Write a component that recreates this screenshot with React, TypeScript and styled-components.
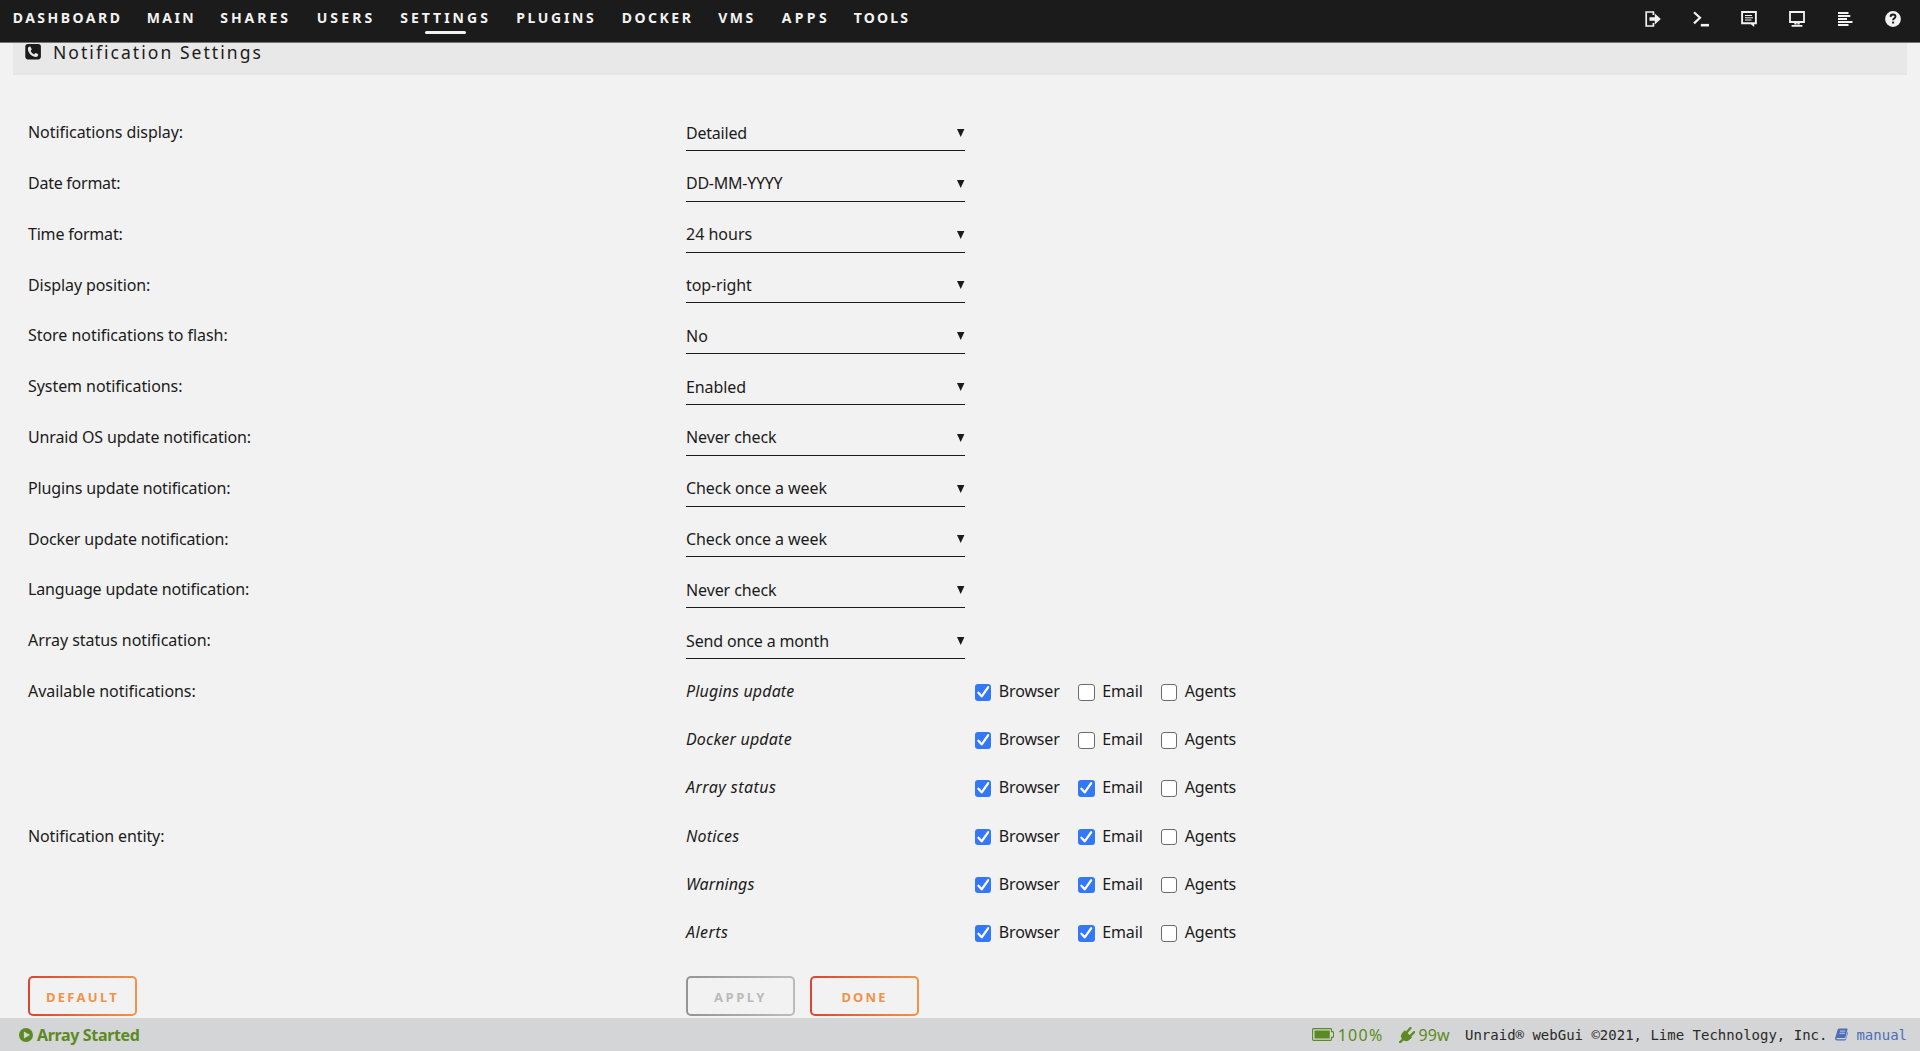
import React from "react";
import styled, { createGlobalStyle } from "styled-components";

const GlobalStyle = createGlobalStyle`
  * { box-sizing: border-box; }
  html, body { margin: 0; padding: 0; }
  body {
    background: #f2f2f2;
    color: #1c1b1b;
    font-family: "Noto Sans", "Open Sans", sans-serif;
    font-size: 16px;
    overflow: hidden;
  }
`;

const Page = styled.div`
  display: flex;
  flex-direction: column;
  height: 1051px;
`;

const Header = styled.header`
  display: flex;
  flex: none;
  justify-content: space-between;
  height: 43px;
  padding: 0 19.5px 0 12.7px;
  background: #1c1b1b;
  border-bottom: 1px solid #757373;
`;

const Nav = styled.nav`
  display: flex;
`;

const NavItem = styled.a<{ $width: number; $tracking: number }>`
  width: ${(p) => p.$width}px;
  display: flex;
  flex-direction: column;
  padding-top: 8px;
  color: #f2f2f2;
  font-size: 14px;
  font-weight: 700;
  line-height: 20px;
  letter-spacing: ${(p) => p.$tracking}px;
  white-space: nowrap;
`;

const ActiveBar = styled.span`
  width: 41px;
  height: 3px;
  margin: 3px 0 0 24.8px;
  border-radius: 2px;
  background: #f2f2f2;
`;

const Tools = styled.div`
  display: flex;
  gap: 32px;
  padding-top: 11px;
`;

const ToolIcon = styled.svg`
  width: 16px;
  height: 16px;
  display: block;
  color: #f2f2f2;
`;

const Main = styled.main`
  flex: 1;
  padding: 0 13px;
`;

const TitleBar = styled.div`
  display: flex;
  align-items: flex-start;
  height: 32px;
  padding: 1px 0 0 12px;
  background: #e8e8e8;
  border-bottom: 2px solid #e5e5e5;
`;

const TitleIcon = styled.svg`
  width: 16px;
  height: 16px;
  color: #1c1b1b;
`;

const TitleText = styled.span`
  margin: -4px 0 0 12px;
  font-size: 17.5px;
  line-height: 24px;
  letter-spacing: 2.05px;
`;

const Form = styled.div`
  padding: 32px 0 0 15px;
`;

const Row = styled.div<{ $height: number }>`
  display: grid;
  grid-template-columns: 658px 279px 1fr;
  height: ${(p) => p.$height}px;
`;

const Label = styled.span<{ $tracking?: number; $italic?: boolean }>`
  padding-top: 14.3px;
  line-height: 22px;
  letter-spacing: ${(p) => p.$tracking ?? 0}px;
  font-style: ${(p) => (p.$italic ? "italic" : "normal")};
  white-space: nowrap;
`;

const Select = styled.div<{ $tracking?: number }>`
  display: flex;
  justify-content: space-between;
  align-items: flex-start;
  height: 44px;
  padding-top: 14.6px;
  border-bottom: 1px solid #1c1b1b;
  line-height: 22px;
  letter-spacing: ${(p) => p.$tracking ?? 0}px;
`;

const Caret = styled.svg`
  width: 8px;
  height: 8px;
  margin: 7.5px 0 0;
`;

const Checks = styled.div`
  display: flex;
  align-items: flex-start;
  padding: 14.3px 0 0 9.5px;
`;

const Check = styled.label<{ $width: number }>`
  display: flex;
  width: ${(p) => p.$width}px;
  line-height: 22px;
  white-space: nowrap;
`;

const Box = styled.span<{ $on: boolean }>`
  display: flex;
  flex: none;
  width: 16.5px;
  height: 16.5px;
  margin: 4px 7.8px 0 0;
  border: ${(p) => (p.$on ? "none" : "1px solid #6c6c6c")};
  border-radius: 3px;
  background: ${(p) => (p.$on ? "#3478f6" : "#fff")};
`;

const CheckText = styled.span<{ $tracking: number }>`
  letter-spacing: ${(p) => p.$tracking}px;
`;

const Actions = styled.div`
  display: grid;
  grid-template-columns: 658px 124px 109px;
  padding-top: 21.4px;
`;

const Button = styled.button<{ $from: string; $to: string; $text: string; $tracking: number }>`
  width: 109px;
  height: 40px;
  padding: 1px 0 0;
  border: 2px solid transparent;
  border-radius: 5px;
  background:
    linear-gradient(#f2f2f2, #f2f2f2) padding-box,
    linear-gradient(90deg, ${(p) => p.$from}, ${(p) => p.$to}) border-box;
  color: ${(p) => p.$text};
  font-family: inherit;
  font-size: 13px;
  font-weight: 700;
  letter-spacing: ${(p) => p.$tracking}px;
`;

const Footer = styled.footer`
  display: flex;
  flex: none;
  align-items: center;
  height: 33px;
  padding: 0 13px 0 19px;
  background: #d4d5d6;
`;

const ArrayState = styled.span`
  display: flex;
  align-items: center;
  gap: 4px;
  margin-right: auto;
  color: #5c8a22;
  font-weight: 700;
  letter-spacing: -0.35px;
`;

const Gauge = styled.span<{ $gap: number; $after: number; $tracking: number }>`
  display: flex;
  align-items: center;
  gap: ${(p) => p.$gap}px;
  margin-right: ${(p) => p.$after}px;
  color: #5c8a22;
  letter-spacing: ${(p) => p.$tracking}px;
`;

const FooterIcon = styled.svg<{ $w: number; $h: number }>`
  width: ${(p) => p.$w}px;
  height: ${(p) => p.$h}px;
  flex: none;
`;

const Copyright = styled.span`
  display: flex;
  align-items: center;
  font-family: "DejaVu Sans Mono", monospace;
  font-size: 14px;
  line-height: 20px;
  color: #2b2a29;
  white-space: pre;
`;

const Manual = styled.a`
  display: flex;
  align-items: center;
  gap: 8px;
  margin-left: 8px;
  color: #4f6db8;
`;

const nav = [
  { name: "DASHBOARD", width: 134, tracking: 2.5 },
  { name: "MAIN", width: 73.5, tracking: 2.4 },
  { name: "SHARES", width: 96.5, tracking: 3 },
  { name: "USERS", width: 83.5, tracking: 3.1 },
  { name: "SETTINGS", width: 116, tracking: 3 },
  { name: "PLUGINS", width: 105.5, tracking: 2.65 },
  { name: "DOCKER", width: 96.5, tracking: 2.5 },
  { name: "VMS", width: 63.5, tracking: 2.5 },
  { name: "APPS", width: 72, tracking: 3.4 },
  { name: "TOOLS", width: 60, tracking: 2.2 },
];
const current = "SETTINGS";

const selects = [
  { label: "Notifications display:", lt: -0.06, value: "Detailed", vt: -0.22 },
  { label: "Date format:", lt: -0.25, value: "DD-MM-YYYY", vt: -0.25 },
  { label: "Time format:", lt: -0.2, value: "24 hours", vt: 0 },
  { label: "Display position:", lt: -0.09, value: "top-right", vt: -0.1 },
  { label: "Store notifications to flash:", lt: -0.04, value: "No", vt: 0 },
  { label: "System notifications:", lt: -0.06, value: "Enabled", vt: -0.1 },
  { label: "Unraid OS update notification:", lt: -0.15, value: "Never check", vt: -0.1 },
  { label: "Plugins update notification:", lt: -0.14, value: "Check once a week", vt: -0.07 },
  { label: "Docker update notification:", lt: -0.15, value: "Check once a week", vt: -0.07 },
  { label: "Language update notification:", lt: -0.17, value: "Never check", vt: -0.1 },
  { label: "Array status notification:", lt: -0.04, value: "Send once a month", vt: -0.15 },
];

const channels = [
  { label: "Available notifications:", lt: -0.05, name: "Plugins update", tracking: 0.15, on: [true, false, false] },
  { label: "", lt: 0, name: "Docker update", tracking: 0.2, on: [true, false, false] },
  { label: "", lt: 0, name: "Array status", tracking: 0.45, on: [true, true, false] },
  { label: "Notification entity:", lt: -0.12, name: "Notices", tracking: 0.2, on: [true, true, false] },
  { label: "", lt: 0, name: "Warnings", tracking: 0.1, on: [true, true, false] },
  { label: "", lt: 0, name: "Alerts", tracking: 0.45, on: [true, true, false] },
];

const targets = [
  { name: "Browser", width: 103.5, tracking: -0.15 },
  { name: "Email", width: 82.5, tracking: -0.15 },
  { name: "Agents", width: 80, tracking: -0.2 },
];

function HeaderIcons() {
  return (
    <Tools>
      <ToolIcon viewBox="0 0 16 16" fill="none" stroke="currentColor">
        <path d="M8.4 4V1H1.2v14H8.4v-3" strokeWidth="1.7" />
        <path d="M4.5 6.2h5.3V2.6L15.8 8l-6 5.4V9.8H4.5z" fill="currentColor" stroke="none" />
      </ToolIcon>
      <ToolIcon viewBox="0 0 16 16" fill="none" stroke="currentColor">
        <path d="M1 1.2l6 5.6-6 5.6" strokeWidth="2.2" />
        <path d="M7.8 14.2H16" strokeWidth="2.6" />
      </ToolIcon>
      <ToolIcon viewBox="0 0 16 16" fill="none" stroke="currentColor">
        <path d="M1.1 1h13.8v11.2H1.1z" strokeWidth="1.9" />
        <path d="M9 12.6h4.2V16z" fill="currentColor" stroke="none" />
        <path d="M4 4.5h7M4 6.7h8M4 9h6.5" strokeWidth="1.1" />
      </ToolIcon>
      <ToolIcon viewBox="0 0 16 16" fill="none" stroke="currentColor">
        <path d="M1 1h14v10H1z" strokeWidth="1.8" />
        <path d="M5.3 11.5h5.4v2H5.3zM2.6 14h10.8v1.8H2.6z" fill="currentColor" stroke="none" />
        <path d="M7.5 12.2h1v1.2h-1z" fill="#1c1b1b" stroke="none" />
      </ToolIcon>
      <ToolIcon viewBox="0 0 16 16" fill="none" stroke="currentColor" strokeWidth="1.9">
        <path d="M1 2h10.5M1 5h12.3M1 8h9M1 11h14.5M1 14h10.5" />
      </ToolIcon>
      <ToolIcon viewBox="0 0 16 16">
        <circle cx="8" cy="8" r="7.9" fill="currentColor" />
        <path d="M5.5 5.9C5.6 4.3 6.6 3.5 8 3.5s2.5.8 2.5 2.1C10.5 7.3 8.1 7.3 8.1 9.3" fill="none" stroke="#1c1b1b" strokeWidth="1.9" />
        <path d="M7.1 10.6h2v1.9h-2z" fill="#1c1b1b" />
      </ToolIcon>
    </Tools>
  );
}

function CheckBox({ on }: { on: boolean }) {
  return (
    <Box $on={on}>
      {on && (
        <svg width="16.5" height="16.5" viewBox="0 0 16.5 16.5" fill="none" stroke="#fff" strokeWidth="2.3">
          <path d="M3.4 8.8l3.3 3.5 6.4-9" strokeLinecap="round" strokeLinejoin="round" />
        </svg>
      )}
    </Box>
  );
}

export default function App() {
  return (
    <Page>
      <GlobalStyle />
      <Header>
        <Nav>
          {nav.map((n) => (
            <NavItem key={n.name} $width={n.width} $tracking={n.tracking}>
              {n.name}
              {n.name === current && <ActiveBar />}
            </NavItem>
          ))}
        </Nav>
        <HeaderIcons />
      </Header>
      <Main>
        <TitleBar>
          <TitleIcon viewBox="0 0 16 16">
            <rect x="0.3" y="0" width="15.6" height="15.4" rx="2.8" fill="currentColor" />
            <path
              d="M4.9 2.6C3.6 3 2.9 3.7 2.9 4.9c0 3.7 4.2 8 8 8 1.3 0 2-.8 2.3-2 .1-.4-.1-.6-.4-.8l-2.1-1c-.6-.2-1 .9-1.5 1.2-.4.2-3.6-2.6-3.5-3.4.1-.5 1.2-1 1-1.6L5.6 2.9c-.2-.3-.4-.4-.7-.3z"
              fill="#e8e8e8"
            />
          </TitleIcon>
          <TitleText>Notification Settings</TitleText>
        </TitleBar>
        <Form>
          {selects.map((s) => (
            <Row key={s.label} $height={50.8}>
              <Label $tracking={s.lt}>{s.label}</Label>
              <Select $tracking={s.vt}>
                {s.value}
                <Caret viewBox="0 0 8 8">
                  <path d="M0 0h7.4L3.7 8z" fill="#1c1b1b" />
                </Caret>
              </Select>
            </Row>
          ))}
          {channels.map((c) => (
            <Row key={c.name} $height={48.2}>
              <Label $tracking={c.lt}>{c.label}</Label>
              <Label $italic $tracking={c.tracking}>
                {c.name}
              </Label>
              <Checks>
                {targets.map((t, i) => (
                  <Check key={t.name} $width={t.width}>
                    <CheckBox on={c.on[i]} />
                    <CheckText $tracking={t.tracking}>{t.name}</CheckText>
                  </Check>
                ))}
              </Checks>
            </Row>
          ))}
          <Actions>
            <Button $from="#dc4433" $to="#f29447" $text="#f0924a" $tracking={2.3}>DEFAULT</Button>
            <Button $from="#949494" $to="#bcbcbc" $text="#bababa" $tracking={2.6}>APPLY</Button>
            <Button $from="#dc4433" $to="#f29447" $text="#f0924a" $tracking={2.1}>DONE</Button>
          </Actions>
        </Form>
      </Main>
      <Footer>
        <ArrayState>
          <FooterIcon $w={14} $h={14} viewBox="0 0 14 14">
            <circle cx="7" cy="7" r="7" fill="currentColor" />
            <path d="M4.9 3.4v7.2L11 7z" fill="#d4d5d6" />
          </FooterIcon>
          Array Started
        </ArrayState>
        <Gauge $gap={4} $after={15} $tracking={1.3}>
          <FooterIcon $w={22} $h={13} viewBox="0 0 22 13">
            <path d="M1.5.6h17.2q.8 0 .8.8v2.2h1q1 0 1 1v3.8q0 1-1 1h-1v2.2q0 .8-.8.8H1.5q-.9 0-.9-.8V1.4q0-.8.9-.8z" fill="none" stroke="currentColor" strokeWidth="1.1" />
            <path d="M2.5 2.5h15.3v8H2.5z" fill="currentColor" />
          </FooterIcon>
          100%
        </Gauge>
        <Gauge $gap={4} $after={15.5} $tracking={0}>
          <FooterIcon $w={16} $h={16} viewBox="0 0 16 16" fill="none" stroke="currentColor">
            <path d="M3.2 5.9l2.6-2.6 7.3 7.1-2.6 2.4C8.600 15 5.300 14.300 3.600 12.500 1.600 10.700 1.200 8 3.200 5.900z" fill="currentColor" stroke="none" />
            <path d="M.8 15.500l3.400-3.400M7.500 5.600l4-4.500M11 9.200l4.200-4.100" strokeWidth="2.300" strokeLinecap="round" />
          </FooterIcon>
          99w
        </Gauge>
        <Copyright>
          Unraid® webGui ©2021, Lime Technology, Inc.
          <Manual>
            <FooterIcon $w={13} $h={13} viewBox="0 0 13 13">
              <path d="M4.2.4h7.7q.9 0 .7.9L10.5 9q-.3.9-1.2.9H2.2q-.9 0-.8.7t.9.7h7.5q.8 0 1-.7l1.700-6.500q.6.400.4 1.100l-1.800 6q-.3 1.300-1.500 1.300H2Q.2 12.500 0 10.600q0-.7.300-1.200L2.700 1.500Q3.100.4 4.200.4z" fill="currentColor" />
              <path d="M5 3.100h5.300M4.500 5.300h5.300" stroke="#d4d5d6" strokeWidth="0.900" />
            </FooterIcon>
            manual
          </Manual>
        </Copyright>
      </Footer>
    </Page>
  );
}
